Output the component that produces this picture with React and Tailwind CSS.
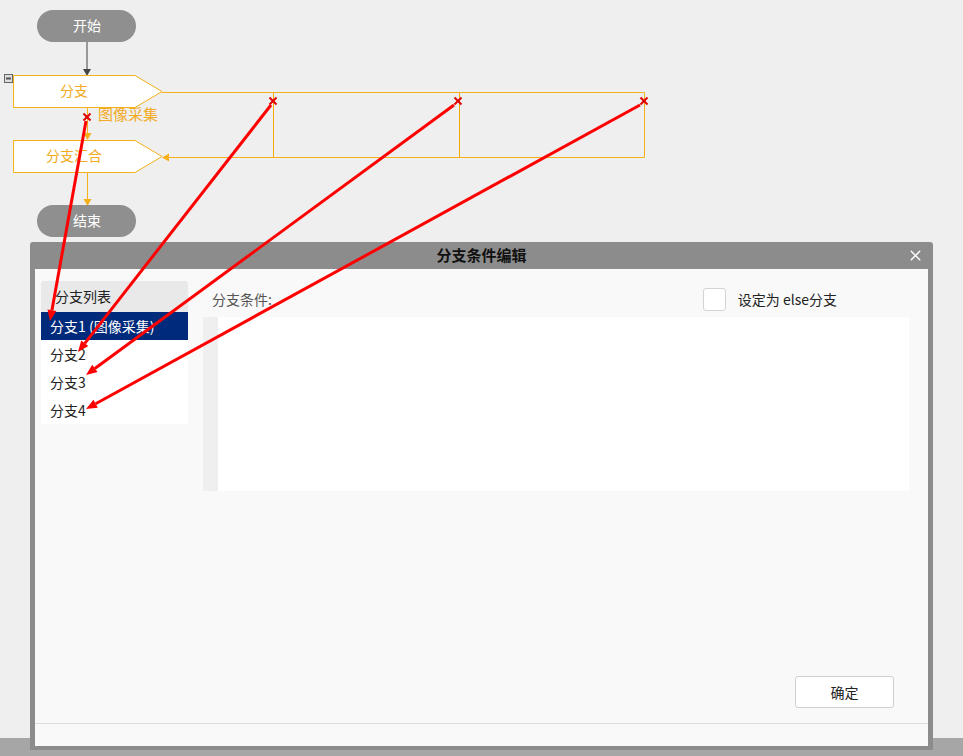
import { X } from 'lucide-react';

const FONT = '"Noto Sans CJK SC", "Noto Sans", sans-serif';
const ORANGE = '#f5b01a';
const ORANGE_TEXT = '#f2aa22';

// 流程图节点（五边形）
const BranchNode = ({ y, label }) => (
  <g>
    <polygon
      points={`13.5,${y + 0.5} 135,${y + 0.5} 162,${y + 16.5} 135,${y + 32.5} 13.5,${y + 32.5}`}
      fill="#fff"
      stroke={ORANGE}
      strokeWidth="1"
    />
    <text x="74" y={y + 21} textAnchor="middle" fontSize="14" fill={ORANGE_TEXT} fontFamily={FONT}>
      {label}
    </text>
  </g>
);

const Pill = ({ y, label }) => (
  <g>
    <rect x="37" y={y} width="99" height="32" rx="16" fill="#8f8f8f" />
    <text x="87" y={y + 21} textAnchor="middle" fontSize="14" fill="#fff" fontFamily={FONT}>
      {label}
    </text>
  </g>
);

const Cross = ({ x, y }) => (
  <g stroke="#e00000" strokeWidth="2">
    <line x1={x - 3.5} y1={y - 3.5} x2={x + 3.5} y2={y + 3.5} />
    <line x1={x + 3.5} y1={y - 3.5} x2={x - 3.5} y2={y + 3.5} />
  </g>
);

const FlowChart = () => (
  <svg className="absolute left-0 top-0" width="700" height="240" shapeRendering="auto">
    <Pill y={10} label="开始" />
    <line x1="87" y1="42" x2="87" y2="70" stroke="#444" strokeWidth="1" />
    <polygon points="83,69 91,69 87,76" fill="#444" />

    {/* 折叠按钮 */}
    <rect x="4.5" y="74.5" width="8" height="8" fill="#ddd" stroke="#666" />
    <line x1="6" y1="78.5" x2="11" y2="78.5" stroke="#555" strokeWidth="2" />

    <BranchNode y={75} label="分支" />

    {/* 分支连线 */}
    <g stroke={ORANGE} strokeWidth="1" fill="none">
      <polyline points="162,92.5 644.5,92.5 644.5,157.5 168,157.5" />
      <line x1="87.5" y1="108" x2="87.5" y2="134" />
      <line x1="87.5" y1="173" x2="87.5" y2="200" />
    </g>
    <rect x="273" y="92" width="1" height="66" fill="#f2a900" />
    <rect x="459" y="92" width="1" height="66" fill="#f2a900" />
    <polygon points="162,157.5 169,153.5 169,161.5" fill={ORANGE} />
    <polygon points="83.5,133 91.5,133 87.5,140" fill={ORANGE} />
    <polygon points="83.5,199 91.5,199 87.5,206" fill={ORANGE} />

    <text x="98" y="120" fontSize="15" fill={ORANGE_TEXT} fontFamily={FONT}>
      图像采集
    </text>

    <BranchNode y={140} label="分支汇合" />
    <Pill y={205} label="结束" />

    <Cross x={87} y={117} />
    <Cross x={273} y={101} />
    <Cross x={458} y={101} />
    <Cross x={644} y={101} />
  </svg>
);

// 红色标注箭头
const Annotation = ({ x1, y1, x2, y2 }) => {
  const ang = Math.atan2(y2 - y1, x2 - x1);
  const len = 11;
  const half = 4.5;
  const bx = x2 - len * Math.cos(ang);
  const by = y2 - len * Math.sin(ang);
  const px = -Math.sin(ang) * half;
  const py = Math.cos(ang) * half;
  return (
    <g>
      <line x1={x1} y1={y1} x2={bx} y2={by} stroke="#ff0000" strokeWidth="3" />
      <polygon points={`${x2},${y2} ${bx + px},${by + py} ${bx - px},${by - py}`} fill="#ff0000" />
    </g>
  );
};

const branches = ['分支1 (图像采集)', '分支2', '分支3', '分支4'];

export default function App() {
  return (
    <div
      className="relative w-[963px] h-[756px] overflow-hidden bg-[#efefef]"
      style={{ fontFamily: FONT }}
    >
      <FlowChart />

      <div className="absolute left-0 right-0 bottom-0 h-[18px] bg-[#a6a6a6]" />

      {/* 分支条件编辑对话框 */}
      <div className="absolute left-[30px] top-[242px] w-[903px] h-[508px] flex flex-col bg-[#8c8c8c] rounded-t-[3px] px-[5px] pb-[4px]">
        <div className="relative h-[27px] flex items-center justify-center shrink-0">
          <span className="text-[15px] font-bold text-[#111]">分支条件编辑</span>
          <X className="absolute right-[4px] top-[5px] text-white" size={17} strokeWidth={2} />
        </div>

        <div className="flex-1 flex flex-col bg-[#f9f9f9]">
          <div className="flex items-start gap-[15px] pt-[12px] pl-[6px] pr-[19px]">
            <div className="w-[147px] shrink-0 bg-white">
              <div className="h-[31px] flex items-center pl-[14px] bg-[#e9e9e9] rounded-t-[2px] text-[14px] text-[#222]">
                分支列表
              </div>
              {branches.map((b, i) => (
                <div
                  key={b}
                  className={
                    i === 0
                      ? 'h-[28px] flex items-center pl-[9px] bg-[#002a7c] text-white text-[14px]'
                      : 'h-[28px] flex items-center pl-[9px] text-[#222] text-[14px]'
                  }
                >
                  {b}
                </div>
              ))}
            </div>

            <div className="flex-1 flex flex-col">
              <div className="h-[36px] flex items-center justify-between">
                <span className="pl-[9px] text-[14px] text-[#555]">分支条件:</span>
                <label className="flex items-center gap-[12px] pr-[72px]">
                  <span className="w-[23px] h-[23px] bg-white border border-[#d4d4d4] rounded-[3px]" />
                  <span className="text-[14px] text-[#222]">设定为 else分支</span>
                </label>
              </div>
              <div className="h-[174px] flex bg-white">
                <div className="w-[15px] bg-[#efefef]" />
                <div className="flex-1" />
              </div>
            </div>
          </div>

          <div className="flex-1" />

          <div className="flex justify-end pr-[34px] pb-[15px]">
            <button className="w-[99px] h-[32px] bg-white border border-[#cfcfcf] rounded-[3px] text-[14px] text-[#222]">
              确定
            </button>
          </div>

          <div className="h-[23px] border-t border-[#dcdcdc]" />
        </div>
      </div>

      <svg className="absolute inset-0 pointer-events-none" width="963" height="756">
        <Annotation x1={86} y1={121} x2={50} y2={321} />
        <Annotation x1={271} y1={105} x2={78} y2={352} />
        <Annotation x1={454} y1={105} x2={86} y2={375} />
        <Annotation x1={640} y1={105} x2={86} y2={409} />
      </svg>
    </div>
  );
}
